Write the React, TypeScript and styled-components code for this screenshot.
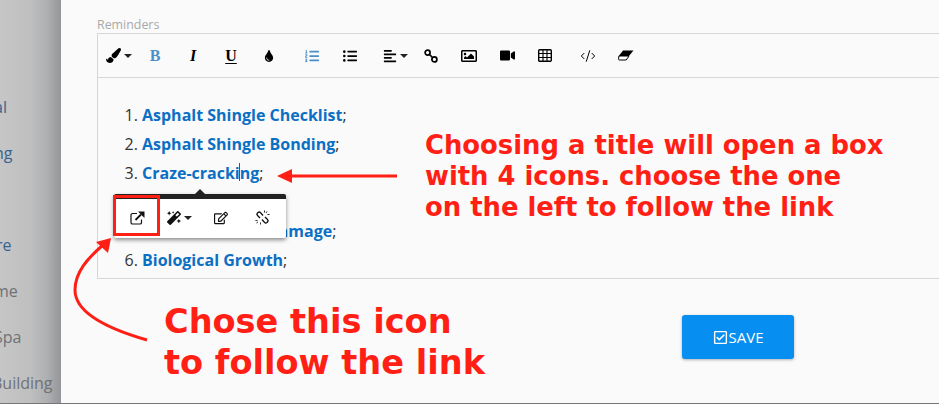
import React from "react";
import styled, { createGlobalStyle } from "styled-components";
import { FaPaintBrush, FaTint, FaListOl, FaListUl, FaAlignLeft, FaRegImage, FaVideo, FaMagic, FaRegEdit, FaRegCheckSquare } from "react-icons/fa";
import { CodeXml } from "lucide-react";

const Global = createGlobalStyle`
  html, body { margin: 0; padding: 0; background: #767676; overflow: hidden; }
  body { width: 939px; height: 404px; font-family: "Open Sans", sans-serif; }
`;
const Page = styled.div`
  position: relative; display: flex; width: 939px; height: 403px; overflow: hidden;
`;
const Sidebar = styled.nav`
  flex: 0 0 61px; overflow: hidden; padding-top: 95px; box-sizing: border-box;
  background: linear-gradient(90deg, #c6c6c6 0%, #bfbfbf 50%, #adafb1 78%, #939598 100%);
`;
const SideItem = styled.div<{ $x: number; $blue?: boolean; $skip?: boolean }>`
  height: 46px; line-height: 24px; font-size: 16px; white-space: nowrap;
  margin-left: ${(p) => p.$x}px; margin-top: ${(p) => (p.$skip ? 46 : 0)}px;
  color: ${(p) => (p.$blue ? "#37648f" : "#6f7276")};
`;
const Panel = styled.main`
  flex: 1; background: #fafafa; padding: 17px 0 0 36px; min-width: 0;
`;
const Label = styled.div`
  font-size: 12.4px; line-height: 16px; color: #a9a9a9;
`;
const Editor = styled.section`
  width: 880px; height: 246px; box-sizing: border-box; border: 1px solid #d6d6d6;
`;
const Toolbar = styled.div`
  display: flex; align-items: center; height: 44px; box-sizing: border-box;
  border-bottom: 1px solid #d6d6d6; padding-left: 8px; color: #000;
`;
const Tool = styled.span<{ $w?: number; $gap?: number; $blue?: boolean; $size?: number }>`
  display: flex; align-items: center; justify-content: center; width: ${(p) => p.$w ?? 38}px;
  margin-left: ${(p) => p.$gap ?? 0}px; height: 20px; font-size: ${(p) => p.$size ?? 14}px;
  color: ${(p) => (p.$blue ? "#4a8fc9" : "#000")};
`;
const Glyph = styled.span<{ $blue?: boolean; $italic?: boolean; $under?: boolean }>`
  font: ${(p) => (p.$italic ? "italic 700" : "700")} 16px/20px "Liberation Serif", serif;
  color: ${(p) => (p.$blue ? "#4a8fc9" : "#000")};
  text-decoration: ${(p) => (p.$under ? "underline" : "none")};
  text-underline-offset: 2px;
`;
const Caret = styled.i`
  display: inline-block; width: 0; height: 0; margin-left: 3px;
  border-left: 4px solid transparent; border-right: 4px solid transparent; border-top: 4px solid #222;
`;
const Content = styled.ol`
  margin: 0; padding: 23px 0 0 44px; font-size: 16px; line-height: 29px; color: #333;
`;
const Item = styled.li``;
const Anchor = styled.a`
  font-weight: 700; color: #0b6fc4; position: relative;
`;
const TextCaret = styled.span`
  position: absolute; left: 97px; top: 1px; width: 1px; height: 18px; background: #1560a8;
`;
const Footer = styled.div`
  display: flex; padding: 36px 0 0 585px;
`;
const SaveButton = styled.button`
  display: flex; align-items: center; justify-content: center; width: 112px; height: 44px;
  border: 0; border-radius: 3px; background: #068ef0; color: #fff; font: 400 15px "Open Sans", sans-serif;
  box-shadow: 0 1px 3px rgba(0,0,0,.3); padding: 0;
  svg { font-size: 15px; margin-right: 1px; }
`;
const Popover = styled.div`
  position: absolute; left: 114px; top: 194px; width: 172px; height: 44px; box-sizing: border-box;
  display: flex; align-items: center; padding: 0 0 2px 4px;
  background: #fff; border-top: 5px solid #222; border-radius: 2px;
  box-shadow: 0 2px 4px rgba(0,0,0,.45);
  &::before {
    content: ""; position: absolute; left: 81px; top: -10px; width: 0; height: 0;
    border-left: 5px solid transparent; border-right: 5px solid transparent; border-bottom: 5px solid #222;
  }
`;
const PopTool = styled.span<{ $w: number }>`
  display: flex; align-items: center; justify-content: center; width: ${(p) => p.$w}px; height: 20px;
  font-size: 14px; color: #111;
`;
const RedBox = styled.div`
  position: absolute; left: 113px; top: 195px; width: 47px; height: 41px; box-sizing: border-box;
  border: 3px solid #ff1f15;
`;
const Note = styled.div<{ $x: number; $y: number; $size: number; $lh: number }>`
  position: absolute; left: ${(p) => p.$x}px; top: ${(p) => p.$y}px; font: 700 ${(p) => p.$size}px/${(p) => p.$lh}px "DejaVu Sans", sans-serif;
  color: #ff1f15; white-space: nowrap;
`;
const Arrows = styled.svg`
  position: absolute; left: 0; top: 0; pointer-events: none;
`;

const OpenIcon = () => (
  <svg width="15" height="14" viewBox="0 0 15 14" fill="none">
    <path d="M7 2.5H2.6A1.6 1.6 0 0 0 1 4.1v7.3A1.6 1.6 0 0 0 2.6 13h7.3a1.6 1.6 0 0 0 1.6-1.6V8.5" stroke="#111" strokeWidth="1.2" />
    <path d="M5.5 9 11 3.5" stroke="#111" strokeWidth="1.8" />
    <path d="M8 .5h6.5V7z" fill="#111" />
  </svg>
);
const ChainIcon = () => (
  <svg width="14" height="14" viewBox="0 0 14 14" fill="none" stroke="#000" strokeWidth="1.7">
    <circle cx="3.6" cy="3.6" r="2.5" />
    <circle cx="10.4" cy="10.4" r="2.5" />
    <path d="M5 5l4 4" />
  </svg>
);
const UnlinkIcon = () => (
  <svg width="15" height="15" viewBox="0 0 15 15" fill="none" stroke="#111">
    <path d="M8 5.500 5.500 2.600a1.700 1.700 0 0 0-2.400-.1l-.6.600a1.700 1.700 0 0 0 0 2.400L5 8" strokeWidth="1.400" />
    <path d="M7 9.500l2.500 2.900a1.700 1.700 0 0 0 2.400.1l.6-.6a1.700 1.700 0 0 0 0-2.400L10 7" strokeWidth="1.400" />
    <path d="M9.500 .5v2M12 1.500l-1 1.500M14.500 4.500H12.500M.5 10.500h2M1.500 13l1.500-1M5.500 14.500v-2" strokeWidth=".9" />
  </svg>
);
const TableIcon = () => (
  <svg width="14" height="13" viewBox="0 0 14 13" fill="none" stroke="#000">
    <rect x=".7" y=".7" width="12.600" height="11.600" rx="1" strokeWidth="1.400" />
    <path d="M.5 4.500h13M.5 8.500h13M5 .5v12M9 .500v12" strokeWidth="1.100" />
  </svg>
);
const EraserIcon = () => (
  <svg width="16" height="11" viewBox="0 0 16 11" fill="none">
    <path d="M5 .5h10.500L11 6H.8z" fill="#000" />
    <path d="M.9 6H11L8.200 10H1.200a.7.7 0 0 1-.6-1.100z" fill="#fff" stroke="#000" strokeWidth="1" />
  </svg>
);

export default function App() {
  return (
    <Page>
      <Global />
      <Sidebar>
        <SideItem $x={-6} $blue>al</SideItem>
        <SideItem $x={-6} $blue>ng</SideItem>
        <SideItem $x={-4} $blue $skip>re</SideItem>
        <SideItem $x={-6}>me</SideItem>
        <SideItem $x={-6}>Spa</SideItem>
        <SideItem $x={-8}>Building</SideItem>
      </Sidebar>
      <Panel>
        <Label>Reminders</Label>
        <Editor>
          <Toolbar>
            <Tool $w={26} $size={15}><FaPaintBrush /><Caret /></Tool>
            <Tool $gap={4}><Glyph $blue>B</Glyph></Tool>
            <Tool><Glyph $italic>I</Glyph></Tool>
            <Tool><Glyph $under>U</Glyph></Tool>
            <Tool $size={12}><FaTint /></Tool>
            <Tool $gap={5} $blue><FaListOl /></Tool>
            <Tool><FaListUl /></Tool>
            <Tool $gap={8} $w={36}><FaAlignLeft /><Caret /></Tool>
            <Tool $w={36}><ChainIcon /></Tool>
            <Tool $gap={1} $size={16}><FaRegImage /></Tool>
            <Tool $size={15}><FaVideo /></Tool>
            <Tool><TableIcon /></Tool>
            <Tool $gap={5}><CodeXml size={16} strokeWidth={1.5} /></Tool>
            <Tool><EraserIcon /></Tool>
          </Toolbar>
          <Content>
            <Item><Anchor>Asphalt Shingle Checklist</Anchor>;</Item>
            <Item><Anchor>Asphalt Shingle Bonding</Anchor>;</Item>
            <Item><Anchor>Craze-cracking<TextCaret /></Anchor>;</Item>
            <Item><Anchor>Algae Growth</Anchor>;</Item>
            <Item><Anchor>Blister and Sun Damage</Anchor>;</Item>
            <Item><Anchor>Biological Growth</Anchor>;</Item>
          </Content>
        </Editor>
        <Footer>
          <SaveButton><FaRegCheckSquare />SAVE</SaveButton>
        </Footer>
      </Panel>
      <Popover>
        <PopTool $w={38}><OpenIcon /></PopTool>
        <PopTool $w={46}><FaMagic /><Caret /></PopTool>
        <PopTool $w={38}><FaRegEdit /></PopTool>
        <PopTool $w={44}><UnlinkIcon /></PopTool>
      </Popover>
      <RedBox />
      <Arrows width="939" height="403" viewBox="0 0 939 403" fill="none">
        <path d="M397 176H290" stroke="#ff1f15" strokeWidth="3" />
        <path d="M277 176l15-7v14z" fill="#ff1f15" />
        <path d="M147 340C105 328 75 312 75 290C75 272 88 258 103 245" stroke="#ff1f15" strokeWidth="3" />
        <path d="M111 238L96 242L108 253z" fill="#ff1f15" />
      </Arrows>
      <Note $x={425} $y={130} $size={25.85} $lh={31}>
        Choosing a title will open a box<br />with 4 icons. choose the one<br />on the left to follow the link
      </Note>
      <Note $x={164} $y={301} $size={33.6} $lh={41}>
        Chose this icon<br />to follow the link
      </Note>
    </Page>
  );
}
